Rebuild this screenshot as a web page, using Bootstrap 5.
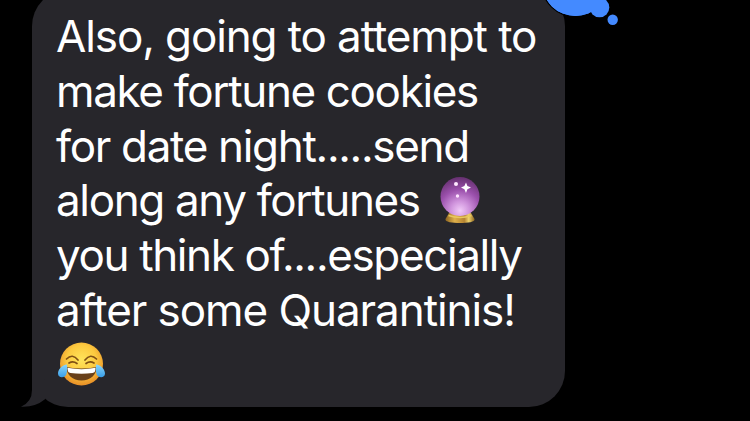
<!DOCTYPE html>
<html lang="en">
<head>
<meta charset="utf-8">
<meta name="viewport" content="width=device-width, initial-scale=1">
<title>Messages</title>
<link rel="stylesheet" href="https://cdn.jsdelivr.net/npm/bootstrap@5.3.0/dist/css/bootstrap.min.css">
<style>
body{background:#000;height:421px;font-family:Inter,"Liberation Sans",sans-serif}
.thread{height:421px}
.bubble{width:533px;height:417px;margin:-10px 0 0 32px;padding:19px 0 0 24px;border-radius:36px;background:#27262b;font-size:44px;line-height:54.75px}
.bubble span{white-space:nowrap}
.l1{letter-spacing:-1.11px}
.l2{letter-spacing:-1.36px}
.l3{letter-spacing:-1.32px}
.l4{letter-spacing:-1.36px}
.l5{letter-spacing:-1.37px}
.l6{letter-spacing:-1.07px}
.tail{left:20px;top:360px;z-index:1}
.reaction{left:540px;top:0;z-index:2}
.orb{width:42px;height:48px;margin-left:19px;margin-top:-2px}
.joy{width:47px;height:46px;margin:4px 0 0 2px}
</style>
</head>
<body class="overflow-hidden">
<main class="thread position-relative overflow-hidden">
  <div class="bubble text-white d-flex flex-column align-items-start">
    <span class="l1">Also, going to attempt to</span>
    <span class="l2">make fortune cookies</span>
    <span class="l3">for date night.....send</span>
    <span class="l4 d-flex align-items-center">along any fortunes
      <svg class="orb" viewBox="0 0 42 48" role="img" aria-label="crystal ball">
        <defs>
          <radialGradient id="ball" cx=".5" cy=".86" r=".86"><stop offset="0" stop-color="#f0c9f7"/><stop offset=".28" stop-color="#cf93dc"/><stop offset=".62" stop-color="#9b50ac"/><stop offset="1" stop-color="#65306f"/></radialGradient>
          <linearGradient id="gold"><stop offset="0" stop-color="#8c6420"/><stop offset=".32" stop-color="#dfb04b"/><stop offset=".65" stop-color="#b48331"/><stop offset=".8" stop-color="#f0d36d"/><stop offset="1" stop-color="#8b631f"/></linearGradient>
        </defs>
        <path d="M10 37h22l3.500 6c1 3-7 4-14.500 4S5.500 46 6.500 43z" fill="url(#gold)"/>
        <circle cx="21" cy="20.500" r="19.500" fill="url(#ball)"/>
        <path d="M9.500 39.500q11.500 4 23 0" stroke="#e9c85e" stroke-width="1.500" fill="none"/>
        <path d="M27 6.500l1.400 3.400 3.600 1.700-3.600 1.600-1.400 3.800-1.600-3.800-3.400-1.600 3.400-1.700z" fill="#fff"/>
        <circle cx="17" cy="8" r="2" fill="#ffeaff"/><circle cx="18.500" cy="20" r="1.700" fill="#ffe4ff"/>
      </svg>
    </span>
    <span class="l5">you think of....especially</span>
    <span class="l6">after some Quarantinis!</span>
    <svg class="joy" viewBox="0 0 47 46" role="img" aria-label="face with tears of joy">
      <defs>
        <radialGradient id="face" cx=".5" cy=".4" r=".62"><stop offset="0" stop-color="#ffe45b"/><stop offset=".55" stop-color="#fcc93f"/><stop offset="1" stop-color="#e68a25"/></radialGradient>
        <linearGradient id="tear" x2="0" y2="1"><stop offset="0" stop-color="#8bd6fb"/><stop offset="1" stop-color="#379de8"/></linearGradient>
      </defs>
      <circle cx="23.500" cy="22" r="21.500" fill="url(#face)"/>
      <path d="M8.500 17q6-6 11.500 1M27 18q5.500-7 11.500-1M11 21q4-2.500 8 .5M28 21.500q4-3 8-.5" fill="none" stroke="#805014" stroke-width="1.700" stroke-linecap="round"/>
      <path d="M8.500 25q15 3 30 0c0 8-6 13.500-15 13.500S8.500 33 8.500 25z" fill="#68401a"/>
      <path d="M9.500 25.800q14 2.700 28 0c0 4-1 5-3 5.200q-11 1.500-22 0c-2-.3-3-1.500-3-5.200z" fill="#fff"/>
      <path d="M9 22.500C4 23 0 27.500 0 31.500c0 5 7 5 8.500.5C9.400 29 9.200 25 9 22.500zM38 22.500c5 .5 9 5 9 9 0 5-7 5-8.500.5-.9-3-.7-7-.5-9.500z" fill="url(#tear)"/>
    </svg>
  </div>
  <svg class="tail position-absolute" width="45" height="50" viewBox="0 0 45 50" aria-hidden="true">
    <path d="M12 5v25q0 12-11 16.700Q15 47.500 25 39.300V20z" fill="#27262b"/>
  </svg>
  <svg class="reaction position-absolute" width="90" height="35" viewBox="0 0 90 35" aria-hidden="true">
    <g fill="#448aff" stroke="#000" stroke-width="2.500" paint-order="stroke"><ellipse cx="35.500" cy="-16" rx="33" ry="32"/><circle cx="59.500" cy="7.500" r="9.800"/><circle cx="72.700" cy="19.800" r="5.200"/></g>
    <ellipse cx="35.500" cy="-16" rx="33" ry="32" fill="#448aff"/>
  </svg>
</main>
<script src="https://cdn.jsdelivr.net/npm/bootstrap@5.3.0/dist/js/bootstrap.bundle.min.js"></script>
</body>
</html>
